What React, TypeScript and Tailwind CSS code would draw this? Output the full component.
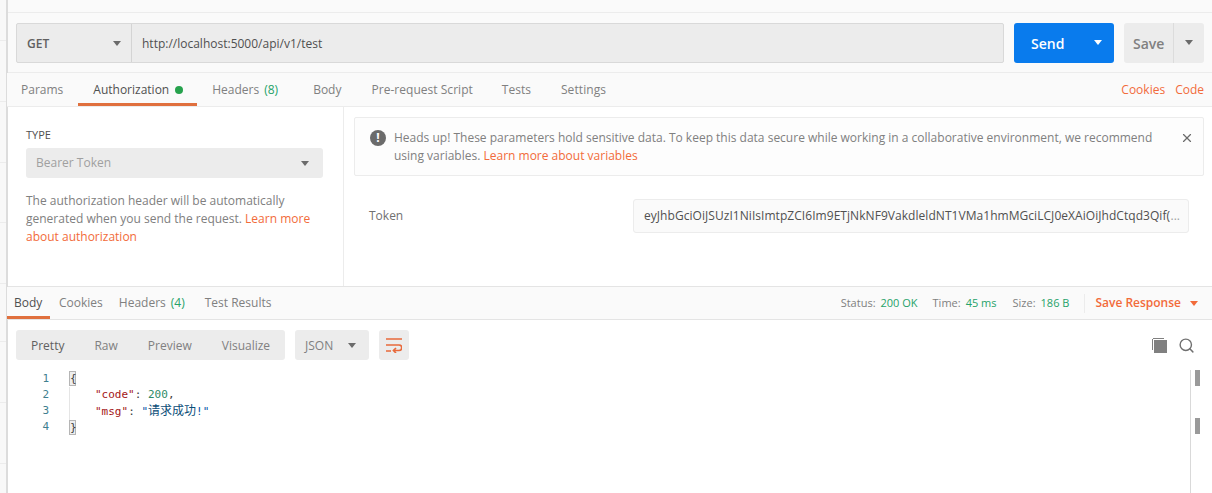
import React from 'react';
import { X, Search } from 'lucide-react';

const Caret = ({ className = 'border-t-[#6b6b6b]' }: { className?: string }) => (
  <span className={`inline-block w-0 h-0 border-x-[4px] border-x-transparent border-t-[5px] ${className}`} />
);

const requestTabs = [
  { label: 'Params', cls: 'pl-[14px] pr-[15px]' },
  { label: 'Authorization', cls: 'pl-[15px] pr-[14px]', active: true },
  { label: 'Headers', cls: 'pl-[15px] pr-[35px]', count: '(8)' },
  { label: 'Body', cls: 'pr-[30px]' },
  { label: 'Pre-request Script', cls: 'pr-[29px] tracking-[0.03px]' },
  { label: 'Tests', cls: 'pr-[30px]' },
  { label: 'Settings', cls: 'tracking-[0.1px]' },
];

const sidebarRows = ['h-[41px]', 'h-[61px]', 'h-[61px]', 'h-[60px]', 'h-[61px]', 'h-[58px]', 'h-[61px]', 'h-[61px]'];

export default function App() {
  return (
    <div className="h-[493px] w-[1212px] overflow-hidden flex bg-white text-[12px] text-[#808080]" style={{ fontFamily: '"Open Sans", "Noto Sans CJK SC", sans-serif' }}>
      {/* sidebar edge */}
      <div className="w-[8px] shrink-0 bg-[#f8f8f8] border-r-2 border-[#dcdcdc] overflow-hidden">
        {sidebarRows.map((h, i) => (
          <div key={i} className={`${h} border-b border-[#ececec]`} />
        ))}
      </div>

      <main className="flex-1 flex flex-col min-w-0">
        <div className="h-[13px] shrink-0 bg-[#fafafa] border-b border-[#ececec]" />

        {/* url bar */}
        <div className="h-[60px] shrink-0 bg-[#fafafa] border-b border-[#ececec] flex items-center pl-[8px] pr-[8px]">
          <div className="h-[40px] flex-1 flex bg-[#ececec] border border-[#d9d9d9] rounded-[2px]">
            <div className="w-[115px] shrink-0 flex items-center justify-between pl-[10px] pr-[10px] pt-[2px] border-r border-[#d4d4d4] text-[#606060] font-semibold">
              GET <Caret />
            </div>
            <div className="flex items-center pl-[10px] pt-[2px] text-[#505050]">http://localhost:5000/api/v1/test</div>
          </div>
          <div className="ml-[10px] w-[100px] h-[40px] flex items-center rounded-[3px] bg-[#097bed] text-white">
            <span className="flex-1 pl-[17px] pt-[2px] text-[14px] font-semibold">Send</span>
            <Caret className="border-t-white mr-[12px]" />
          </div>
          <div className="ml-[10px] w-[80px] h-[40px] flex items-center rounded-[3px] bg-[#ececec] text-[#808080]">
            <span className="w-[50px] pl-[9px] pt-[2px] text-[14px] font-semibold border-r border-[#dcdcdc] h-full flex items-center">Save</span>
            <span className="flex-1 flex justify-center"><Caret /></span>
          </div>
        </div>

        {/* request tabs */}
        <div className="h-[34px] shrink-0 bg-[#fafafa] border-b border-[#ececec] flex items-stretch pr-[8px] -ml-px">
          {requestTabs.map((t) => (
            <div key={t.label} className={`relative flex items-center whitespace-nowrap ${t.cls} ${t.active ? 'text-[#505050]' : ''}`}>
              {t.label}
              {t.active && <span className="ml-[6px] w-[8px] h-[8px] rounded-full bg-[#26a24d]" />}
              {t.count && <span className="ml-[5px] text-[#26a269]">{t.count}</span>}
              {t.active && <span className="absolute left-0 right-0 bottom-0 h-[3px] bg-[#e0703e]" />}
            </div>
          ))}
          <div className="ml-auto flex items-center gap-[10px] text-[#f26b3a]">
            <span>Cookies</span>
            <span>Code</span>
          </div>
        </div>

        {/* auth panel */}
        <div className="h-[180px] shrink-0 flex border-b border-[#e4e4e4]">
          <div className="w-[336px] shrink-0 border-r border-[#ececec] pl-[18px] pr-[20px] pt-[20px]">
            <div className="text-[11px] leading-[16px] text-[#505050]">TYPE</div>
            <div className="mt-[5px] h-[30px] flex items-center justify-between rounded-[3px] bg-[#ececec] pl-[10px] pr-[14px] text-[#a0a0a0]">
              Bearer Token <Caret />
            </div>
            <p className="mt-[14px] leading-[18px]">
              The authorization header will be automatically generated when you send the request. <span className="text-[#f26b3a]">Learn more about authorization</span>
            </p>
          </div>
          <div className="flex-1 min-w-0 pl-[10px] pr-[8px] pt-[10px]">
            <div className="h-[59px] flex border border-[#ececec] rounded-[2px] bg-[#fdfdfd] pl-[15px] pr-[9px] pt-[11px]">
              <span className="w-[16px] h-[16px] mt-px shrink-0 rounded-full bg-[#6b6b6b] text-white text-[12px] font-bold leading-[16px] text-center">!</span>
              <p className="ml-[8px] w-[770px] leading-[18px]">
                Heads up! These parameters hold sensitive data. To keep this data secure while working in a collaborative environment, we recommend using variables. <span className="text-[#f26b3a]">Learn more about variables</span>
              </p>
              <X size={14} strokeWidth={2} className="ml-auto mt-[2px] text-[#6b6b6b]" />
            </div>
            <div className="mt-[23px] flex items-center pl-[15px] pr-[15px]">
              <span className="text-[#707070]">Token</span>
              <div className="ml-auto w-[556px] h-[34px] flex items-center border border-[#ececec] rounded-[3px] bg-[#fafafa] pl-[10px] pr-[8px] text-[#505050]">
                <span className="flex-1 min-w-0 overflow-hidden whitespace-nowrap tracking-[0.05px]">eyJhbGciOiJSUzI1NiIsImtpZCI6Im9ETjNkNF9VakdleldNT1VMa1hmMGciLCJ0eXAiOiJhdCtqd3Qif(</span>
                <span className="ml-[1px] text-[#a0a0a0]">...</span>
              </div>
            </div>
          </div>
        </div>

        {/* response tabs */}
        <div className="h-[33px] shrink-0 bg-[#fafafa] border-b border-[#e4e4e4] flex items-stretch pr-[14px] -ml-px">
          <div className="relative flex items-center pl-[7px] pr-[8px] w-[43px] text-[#505050]">
            Body
            <span className="absolute left-0 right-0 bottom-0 h-[3px] bg-[#e0703e]" />
          </div>
          <div className="flex items-center ml-[9px]">Cookies</div>
          <div className="flex items-center ml-[16px]">Headers <span className="ml-[5px] text-[#26a269]">(4)</span></div>
          <div className="flex items-center ml-[20px]">Test Results</div>
          <div className="ml-auto flex items-center text-[11px]">
            <span>Status:</span><span className="ml-[5px] text-[#26a269]">200 OK</span>
            <span className="ml-[15px]">Time:</span><span className="ml-[5px] text-[#26a269]">45 ms</span>
            <span className="ml-[16px]">Size:</span><span className="ml-[5px] text-[#26a269]">186 B</span>
            <span className="ml-[15px] h-[19px] border-l border-[#ececec]" />
            <span className="ml-[10px] text-[12px] font-semibold text-[#f26b3a]">Save Response</span>
            <Caret className="border-t-[#f26b3a] ml-[9px]" />
          </div>
        </div>

        {/* response toolbar */}
        <div className="h-[50px] shrink-0 flex items-center pl-[8px] pr-[17px]">
          <div className="h-[30px] w-[269px] flex items-center pt-[2px] rounded-[3px] bg-[#ececec] text-[#606060]">
            <span className="ml-[15px]">Pretty</span>
            <span className="ml-[30px] text-[#808080]">Raw</span>
            <span className="ml-[30px] text-[#808080]">Preview</span>
            <span className="ml-[30px] text-[#808080]">Visualize</span>
          </div>
          <div className="ml-[10px] h-[30px] w-[74px] flex items-center justify-between rounded-[3px] bg-[#ececec] pl-[10px] pr-[13px]">
            <span className="pt-[2px]">JSON</span> <Caret />
          </div>
          <div className="ml-[10px] w-[30px] h-[30px] flex items-center justify-center rounded-[3px] bg-[#ececec]">
            <svg width="16" height="15" viewBox="0 0 16 15" fill="none" stroke="#e8693b" strokeWidth="1.7">
              <path d="M0 1h16M0 7h13a2.5 2.5 0 0 1 0 5.5H8M0 13h5" />
              <path d="M10 10l-2.5 2.5L10 15" />
            </svg>
          </div>
          <div className="ml-auto flex items-center gap-[11px] text-[#707070]">
            <svg width="15" height="15" viewBox="0 0 15 15" fill="#808080">
              <path d="M0 1h1v11H0z" />
              <path d="M1 0h11v1H1z" />
              <rect x="2" y="2" width="13" height="13" />
            </svg>
            <Search size={17} strokeWidth={2} />
          </div>
        </div>

        {/* code view */}
        <div className="flex-1 flex min-h-0 relative pt-px" style={{ fontFamily: '"DejaVu Sans Mono", "Noto Sans CJK SC", monospace' }}>
          <div className="w-[41px] shrink-0 text-right text-[11px] leading-[16px] text-[#3f7f8f]">
            <div>1</div><div>2</div><div>3</div><div>4</div>
          </div>
          <div className="ml-[20px] text-[11px] leading-[16px] text-[#404040]">
            <div><span className="inline-block w-[7px] h-[15px] leading-[14px] border border-[#b5b5b5] bg-[#eeeeee]">{'{'}</span></div>
            <div className="border-l border-[#e5e5e5] pl-[25px]"><span className="text-[#a31515]">"code"</span>: <span className="text-[#2f8a68]">200</span>,</div>
            <div className="border-l border-[#e5e5e5] pl-[25px]"><span className="text-[#a31515]">"msg"</span>: <span className="text-[#0451a5]">"<span className="text-[12px] text-[#0a4d78]">请求成功</span>!"</span></div>
            <div><span className="inline-block w-[7px] h-[15px] leading-[14px] border border-[#b5b5b5] bg-[#eeeeee]">{'}'}</span></div>
          </div>
          {/* minimap scrollbar */}
          <div className="absolute left-[1182px] top-0 bottom-0 w-[14px] border-l border-[#d9d9d9]">
            <div className="absolute left-[4px] top-0 w-[5px] h-[16px] bg-[#9a9a9a]" />
            <div className="absolute left-[4px] top-[48px] w-[5px] h-[16px] bg-[#9a9a9a]" />
          </div>
        </div>
      </main>
    </div>
  );
}
